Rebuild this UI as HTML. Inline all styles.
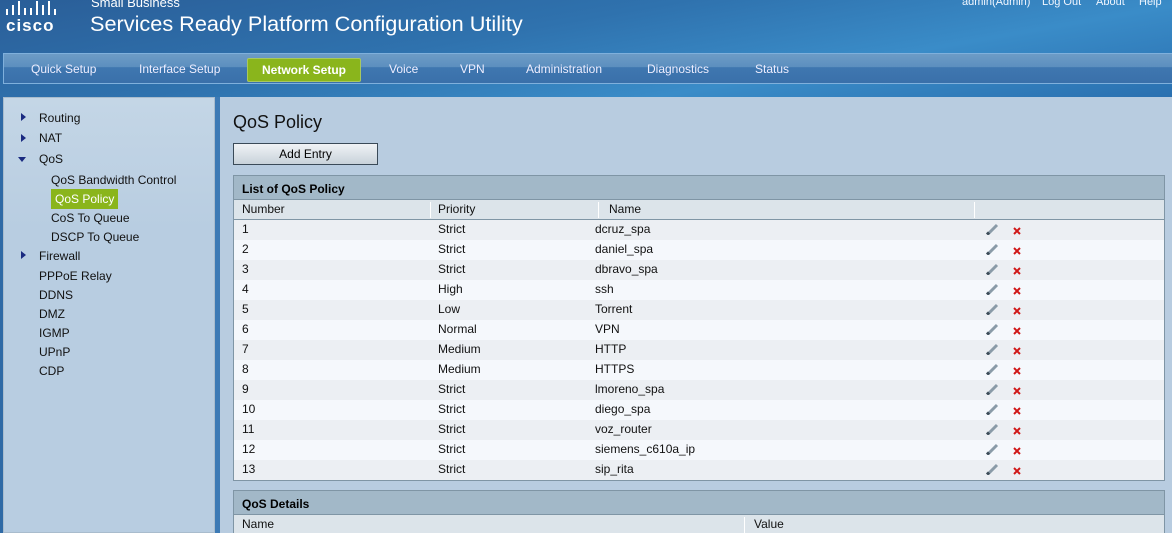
<!DOCTYPE html>
<html style="overflow:hidden"><head><style>
*{margin:0;padding:0;box-sizing:border-box}
html,body{width:1172px;height:533px;overflow:hidden}
body{font-family:"Liberation Sans",sans-serif;background:#2f6aa6;position:relative;font-size:12px}
.hdr{position:absolute;left:0;top:0;width:1172px;height:97px;background:linear-gradient(170deg,#2a5e98 0%,#2f72ae 40%,#3a8cc8 70%,#2a70b0 100%)}
.nav{position:absolute;left:3px;top:53px;width:1169px;height:31px;border-top:1px solid #7fb0dc;border-bottom:1px solid #7fb0dc;border-left:1px solid #7fb0dc;background:linear-gradient(#6d9cc6 0%,#5c8fbf 45%,#3f77b0 46%,#3a70aa 100%)}
.nav span{position:absolute;top:8px;color:#eef;font-size:12px}
.nav .act{top:4px;background:#8ab51c;border:1px solid #a8c860;padding:4px 14px;font-weight:bold;border-radius:2px;color:#fff}
.left{position:absolute;left:3px;top:97px;width:212px;height:436px;background:linear-gradient(#c4d6e6,#b8cde1 30%);border:1px solid #a9bccd;}
.div{position:absolute;left:215px;top:97px;width:5px;height:436px;background:#3d7ab5}
.content{position:absolute;left:220px;top:97px;width:952px;height:436px;background:#b8cce0}
.l{position:absolute;font-size:12px;color:#111}
.tri{position:absolute;width:0;height:0}
.t{position:absolute;left:233px;width:932px;border:1px solid #7f95a5;overflow:hidden}
.th{height:24px;background:#a2b8c8;font-weight:bold;padding:6px 8px;font-size:12px;border-bottom:1px solid #7f95a5}
.ch{height:20px;background:#dce4ea;position:relative;border-bottom:1px solid #7f95a5}
.r{height:20px;position:relative}
.c{position:absolute;top:2px;font-size:12px;color:#111}
.sep{position:absolute;top:2px;width:1px;height:16px;background:#fff}
.tr{position:absolute;top:-4px;color:#f0f6ff;font-size:11px}
</style></head><body>
<div class="hdr">
 <svg style="position:absolute;left:6px;top:0px" width="56" height="16"><g fill="#fff">
 <rect x="0" y="9" width="2" height="6"/><rect x="6" y="5" width="2" height="10"/><rect x="12" y="1" width="2" height="14"/><rect x="18" y="8" width="2" height="7"/><rect x="24" y="8" width="2" height="7"/><rect x="30" y="1" width="2" height="14"/><rect x="36" y="5" width="2" height="10"/><rect x="42" y="1" width="2" height="14"/><rect x="48" y="9" width="2" height="6"/></g></svg>
 <div style="position:absolute;left:6px;top:16px;color:#fff;font-weight:bold;font-size:17px;letter-spacing:1px">cisco</div>
 <div style="position:absolute;left:91px;top:-5px;color:#fff;font-size:13px">Small Business</div>
 <div style="position:absolute;left:90px;top:11px;color:#fff;font-size:21.7px">Services Ready Platform Configuration Utility</div>
 <div class="tr" style="left:962px">admin(Admin)</div>
 <div class="tr" style="left:1042px">Log Out</div>
 <div class="tr" style="left:1096px">About</div>
 <div class="tr" style="left:1139px">Help</div>
</div>
<div class="nav">
 <span style="left:27px">Quick Setup</span><span style="left:135px">Interface Setup</span>
 <span class="act" style="left:243px">Network Setup</span>
 <span style="left:385px">Voice</span><span style="left:456px">VPN</span><span style="left:522px">Administration</span><span style="left:643px">Diagnostics</span><span style="left:751px">Status</span>
</div>
<div class="left"></div>
<div class="div"></div>
<div class="content"></div>
<div class="tri" style="left:21px;top:113px;border-left:5px solid #1a2a80;border-top:4px solid transparent;border-bottom:4px solid transparent"></div>
<div class="tri" style="left:21px;top:134px;border-left:5px solid #1a2a80;border-top:4px solid transparent;border-bottom:4px solid transparent"></div>
<div class="tri" style="left:18px;top:157px;border-top:5px solid #1a2a80;border-left:4px solid transparent;border-right:4px solid transparent"></div>
<div class="tri" style="left:21px;top:251px;border-left:5px solid #1a2a80;border-top:4px solid transparent;border-bottom:4px solid transparent"></div>
<div class="l" style="left:39px;top:111px">Routing</div>
<div class="l" style="left:39px;top:131px">NAT</div>
<div class="l" style="left:39px;top:152px">QoS</div>
<div class="l" style="left:51px;top:173px">QoS Bandwidth Control</div>
<div class="l" style="left:51px;top:189px;background:#8ab51c;color:#fff;padding:3px 4px;height:20px">QoS Policy</div>
<div class="l" style="left:51px;top:211px">CoS To Queue</div>
<div class="l" style="left:51px;top:230px">DSCP To Queue</div>
<div class="l" style="left:39px;top:249px">Firewall</div>
<div class="l" style="left:39px;top:269px">PPPoE Relay</div>
<div class="l" style="left:39px;top:288px">DDNS</div>
<div class="l" style="left:39px;top:307px">DMZ</div>
<div class="l" style="left:39px;top:326px">IGMP</div>
<div class="l" style="left:39px;top:345px">UPnP</div>
<div class="l" style="left:39px;top:364px">CDP</div>
<div class="l" style="left:233px;top:112px;font-size:18px">QoS Policy</div>
<div style="position:absolute;left:233px;top:143px;width:145px;height:22px;border:1px solid #3a4a58;background:linear-gradient(#f0f3f6,#c8d2da);text-align:center;padding-top:3px;font-size:12px">Add Entry</div>
<div class="t" style="top:175px">
 <div class="th">List of QoS Policy</div>
 <div class="ch"><span class="c" style="left:8px">Number</span><span class="sep" style="left:196px"></span><span class="c" style="left:204px">Priority</span><span class="sep" style="left:364px"></span><span class="c" style="left:375px">Name</span><span class="sep" style="left:740px"></span></div>
 <div id="rows"></div>
</div>
<div class="t" style="top:490px;height:43px;border-bottom:none">
 <div class="th">QoS Details</div>
 <div class="ch" style="border-bottom:none"><span class="c" style="left:8px">Name</span><span class="sep" style="left:510px"></span><span class="c" style="left:520px">Value</span></div>
</div>
<script>
var d=[["1","Strict","dcruz_spa"],["2","Strict","daniel_spa"],["3","Strict","dbravo_spa"],["4","High","ssh"],["5","Low","Torrent"],["6","Normal","VPN"],["7","Medium","HTTP"],["8","Medium","HTTPS"],["9","Strict","lmoreno_spa"],["10","Strict","diego_spa"],["11","Strict","voz_router"],["12","Strict","siemens_c610a_ip"],["13","Strict","sip_rita"]];
var h="";d.forEach(function(r,i){h+='<div class="r" style="background:'+(i%2?'#f5f8fc':'#eceff3')+'"><span class="c" style="left:8px">'+r[0]+'</span><span class="c" style="left:204px">'+r[1]+'</span><span class="c" style="left:361px">'+r[2]+'</span><svg style="position:absolute;left:752px;top:3px" width="14" height="12"><path d="M2 11 L11 2" stroke="#8a9ba8" stroke-width="3"/><path d="M1 11.5 L3 9.5" stroke="#3c4c58" stroke-width="3"/></svg><svg style="position:absolute;left:779px;top:7px" width="8" height="8"><path d="M1 1 L7 7 M7 1 L1 7" stroke="#d01818" stroke-width="2"/></svg></div>'});
document.getElementById("rows").innerHTML=h;
</script>
</body></html>
